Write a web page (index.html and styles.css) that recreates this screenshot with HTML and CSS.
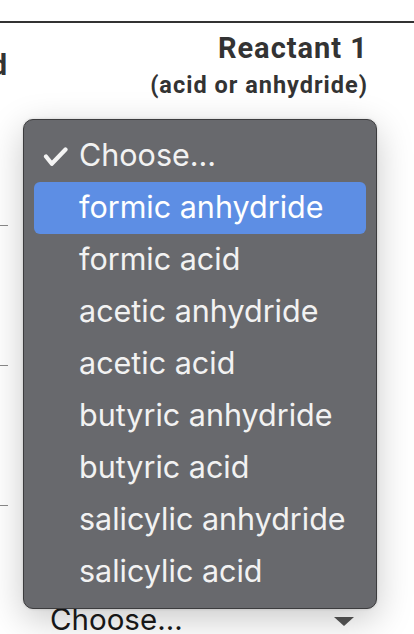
FILE: index.html
```html
<!DOCTYPE html>
<html>
<head>
<meta charset="utf-8">
<link rel="stylesheet" href="styles.css">
</head>
<body>
<div class="page">
  <div class="rule"></div>
  <div class="table">
    <div class="head">
      <div class="h-left"><span>Compound</span></div>
      <div class="h-right">
        <div class="h-title">Reactant 1</div>
        <div class="h-sub">(acid or anhydride)</div>
      </div>
    </div>
    <div class="rows">
      <div class="row"><span class="tick"></span></div>
      <div class="row"><span class="tick"></span></div>
      <div class="row last">
        <span class="tick"></span>
        <div class="select">
          <span>Choose...</span>
          <span class="arrow"></span>
        </div>
      </div>
    </div>
  </div>

  <div class="menu">
    <div class="item checked">
      <svg class="check" width="26" height="20" viewBox="0 0 26 20"><path d="M3 9.5 L8.8 16.8 L22.5 2.5" fill="none" stroke="#f4f4f4" stroke-width="4.2" stroke-linecap="round" stroke-linejoin="round"/></svg>
      <span>Choose...</span>
    </div>
    <div class="item active"><span>formic anhydride</span></div>
    <div class="item"><span>formic acid</span></div>
    <div class="item"><span>acetic anhydride</span></div>
    <div class="item"><span>acetic acid</span></div>
    <div class="item"><span>butyric anhydride</span></div>
    <div class="item"><span>butyric acid</span></div>
    <div class="item"><span>salicylic anhydride</span></div>
    <div class="item"><span>salicylic acid</span></div>
  </div>
</div>
</body>
</html>
```

FILE: styles.css
```css
html, body {
  margin: 0;
  padding: 0;
  background: #ffffff;
  overflow: hidden;
}
.page {
  position: relative;
  width: 414px;
  height: 634px;
  overflow: hidden;
}
.rule {
  margin-top: 21px;
  height: 2px;
  background: #333333;
}
.table {
  display: flex;
  flex-direction: column;
}
.head {
  display: flex;
  justify-content: space-between;
  align-items: flex-start;
  height: 80px;
}
.h-left {
  width: 7px;
  flex-shrink: 0;
  display: flex;
  justify-content: flex-end;
  white-space: nowrap;
  font-family: Roboto, "Liberation Sans", sans-serif;
  font-weight: 700;
  font-size: 29px;
  line-height: 34px;
  color: #333333;
  margin-top: 25px;
}
.h-right {
  text-align: right;
  margin-right: 47px;
  color: #333333;
  font-family: Roboto, "Liberation Sans", sans-serif;
  font-weight: 700;
}
.h-title {
  font-size: 29px;
  letter-spacing: 1px;
  margin-right: -1px;
  line-height: 33px;
  margin-top: 9px;
}
.h-sub {
  font-size: 23.5px;
  letter-spacing: 1px;
  margin-right: -1px;
  line-height: 31px;
  margin-top: 5px;
}
.rows {
  display: flex;
  flex-direction: column;
  padding-top: 122px;
}
.row {
  height: 140px;
}
.row.last {
  height: auto;
}
.tick {
  display: block;
  width: 8px;
  height: 1px;
  background: #8a8a8a;
}
.select {
  display: flex;
  justify-content: space-between;
  align-items: center;
  margin-top: 95px;
  padding: 0 60px 0 50px;
  height: 36px;
  font-family: Inter, "Liberation Sans", sans-serif;
  font-size: 29.5px;
  color: #1a1a1a;
}
.arrow {
  width: 0;
  height: 0;
  border-left: 10.5px solid transparent;
  border-right: 10.5px solid transparent;
  border-top: 9px solid #555555;
  margin-top: 5px;
}
.menu {
  position: absolute;
  left: 23px;
  top: 119px;
  width: 352px;
  padding: 10px 0;
  background: #68696d;
  border: 1px solid #3c3c3e;
  border-radius: 10px;
  box-shadow: 0 10px 36px rgba(0, 0, 0, 0.22), 0 0 3px rgba(0,0,0,0.15);
  font-family: Inter, "Liberation Sans", sans-serif;
  font-size: 30.5px;
  color: #f2f2f2;
}
.item {
  position: relative;
  height: 52px;
  margin: 0 10px;
  padding-left: 45px;
  display: flex;
  align-items: center;
  border-radius: 6px;
}
.item span {
  margin-top: -3px;
}
.item.active {
  background: #5d8ee4;
  color: #ffffff;
}
.check {
  position: absolute;
  left: 9px;
  top: 17px;
}
```
